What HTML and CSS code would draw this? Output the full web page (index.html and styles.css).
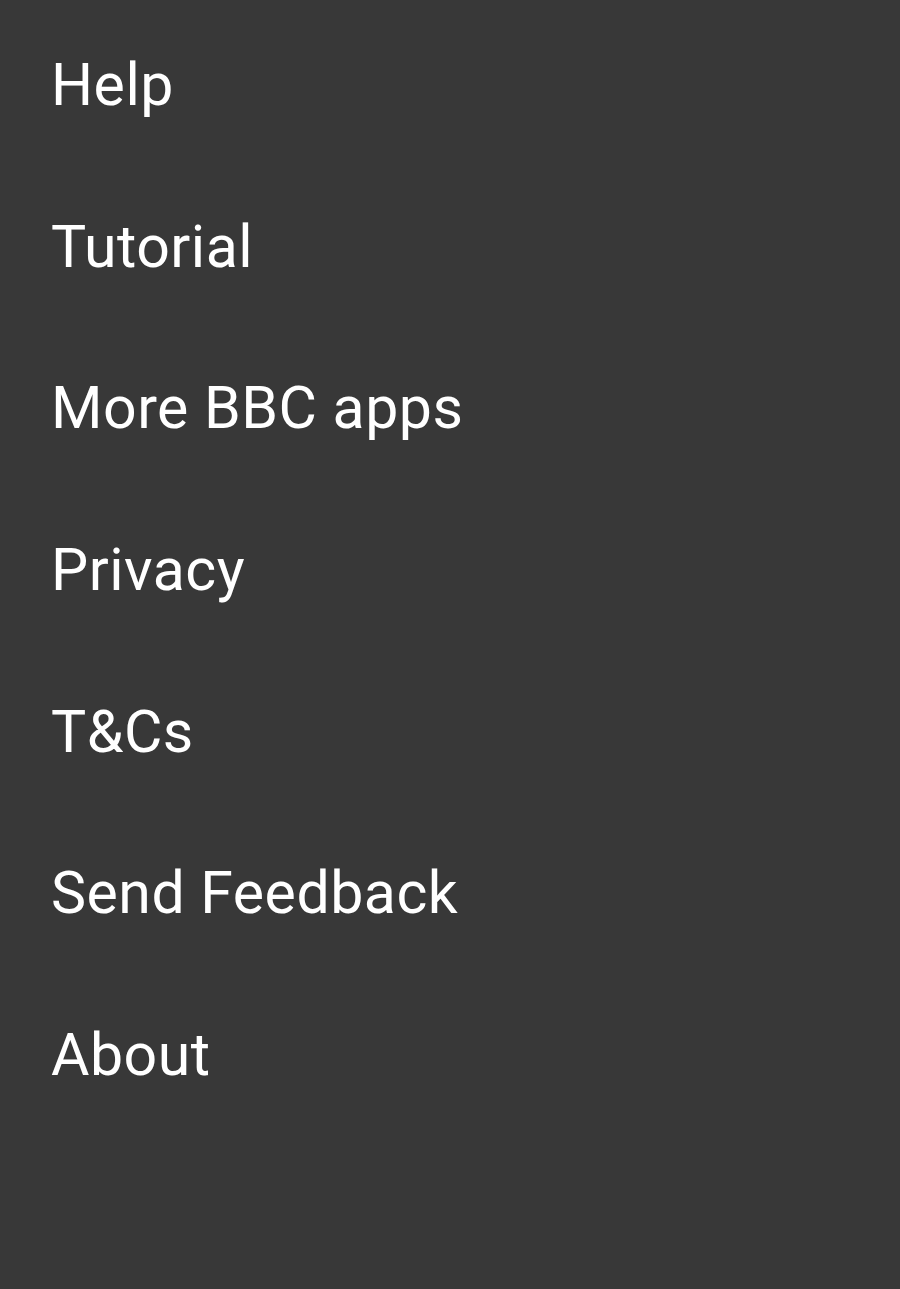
FILE: index.html
```html
<!DOCTYPE html>
<html>
<head>
<meta charset="utf-8">
<link rel="stylesheet" href="styles.css">
</head>
<body>
<ul class="menu">
  <li class="item">Help</li>
  <li class="item">Tutorial</li>
  <li class="item">More BBC apps</li>
  <li class="item">Privacy</li>
  <li class="item">T&amp;Cs</li>
  <li class="item">Send Feedback</li>
  <li class="item">About</li>
</ul>
</body>
</html>
```
FILE: styles.css
```css
html, body {
  margin: 0;
  padding: 0;
  background: #383838;
  height: 100%;
}
body {
  font-family: Roboto, "Liberation Sans", sans-serif;
  color: #ffffff;
}
.menu {
  list-style: none;
  margin: 0;
  padding: 4px 0 0 0;
}
.item {
  height: 161.67px;
  line-height: 161.67px;
  font-size: 59px;
  letter-spacing: 0.5px;
  padding-left: 51px;
  white-space: nowrap;
}
```
